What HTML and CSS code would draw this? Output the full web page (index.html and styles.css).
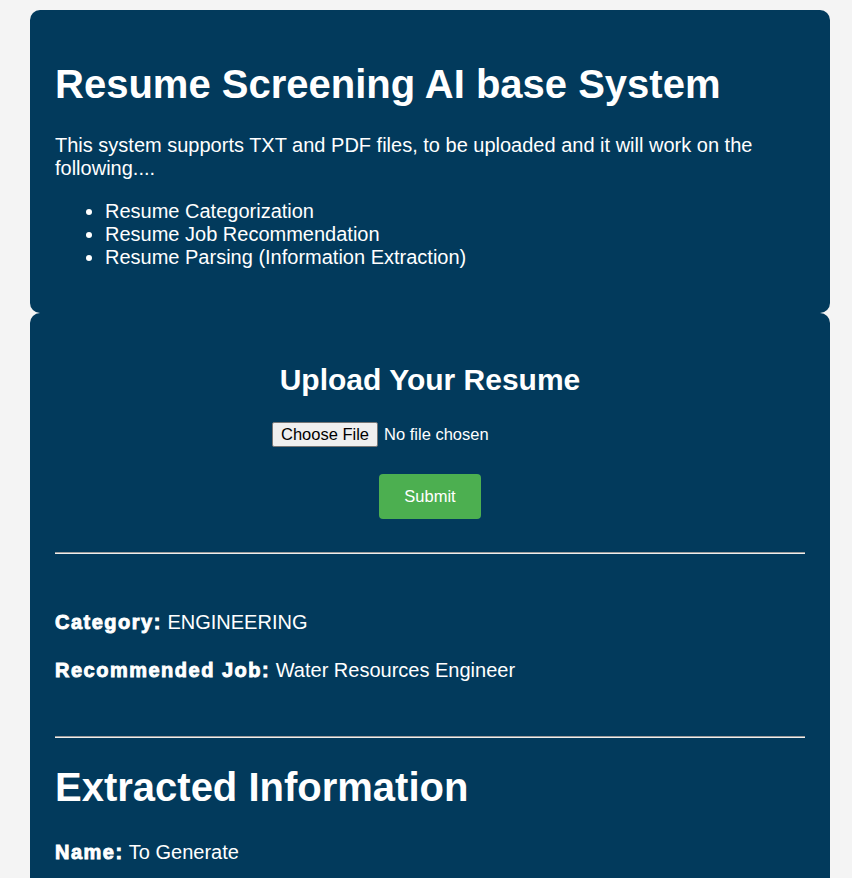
FILE: index.html
```html
<!DOCTYPE html>
<html lang="en">
<head>
<meta charset="utf-8">
<title>Resume Screening AI base System</title>
<link rel="stylesheet" href="styles.css">
</head>
<body>
<div class="container">
  <section class="card card-intro">
    <h1>Resume Screening AI base System</h1>
    <p>This system supports TXT and PDF files, to be uploaded and it will work on the following....</p>
    <ul>
      <li>Resume Categorization</li>
      <li>Resume Job Recommendation</li>
      <li>Resume Parsing (Information Extraction)</li>
    </ul>
  </section>
  <section class="card card-upload">
    <h2>Upload Your Resume</h2>
    <form class="upload-form">
      <input type="file" name="resume" class="file-input">
      <button type="button" class="submit-btn">Submit</button>
    </form>
    <hr class="divider divider-top">
    <div class="results">
      <p class="result"><strong class="label">Category:</strong> ENGINEERING</p>
      <p class="result"><strong class="label">Recommended Job:</strong> Water Resources Engineer</p>
    </div>
    <hr class="divider">
    <h1>Extracted Information</h1>
    <p class="result name"><strong class="label">Name:</strong> To Generate</p>
  </section>
</div>
</body>
</html>
```

FILE: styles.css
```css
html, body {
  margin: 0;
}
body {
  padding: 10px 0 0 8px;
  background: #f4f4f4;
  font-family: "Liberation Sans", Arial, sans-serif;
  font-size: 20px;
  color: #ffffff;
}
.container {
  width: 800px;
  margin: 0 auto;
}
.card {
  background: #023a5c;
  border-radius: 10px;
  padding: 25px 25px 24px;
}
.card-upload {
  padding-top: 26px;
}
h1 {
  font-size: 40px;
  font-weight: bold;
  margin: 26.8px 0;
}
h2 {
  font-size: 30px;
  font-weight: bold;
  text-align: center;
  margin: 24.9px 0;
}
.card-intro p {
  margin: 20px 0;
  line-height: 23px;
}
.card-intro ul {
  margin: 20px 0;
  padding-left: 50px;
}
.upload-form {
  display: flex;
  flex-direction: column;
  align-items: center;
}
.file-input {
  font-family: "Liberation Sans", Arial, sans-serif;
  font-size: 16.5px;
  color: #ffffff;
  width: 316px;
}
.file-input::file-selector-button {
  font-family: "Liberation Sans", Arial, sans-serif;
  font-size: 16.5px;
  color: #000000;
  background: #efefef;
  border: 1px solid #767676;
  border-radius: 2px;
  padding: 2px 8px;
  margin-right: 6px;
}
.submit-btn {
  margin-top: 27px;
  background: #4caf50;
  color: #ffffff;
  border: none;
  border-radius: 4px;
  padding: 13px 25px;
  font-family: "Liberation Sans", Arial, sans-serif;
  font-size: 16.5px;
  line-height: 19px;
  cursor: pointer;
}
.divider {
  border: none;
  border-top: 1px solid #9a9a9a;
  border-bottom: 1px solid #eeeeee;
  margin: 0;
}
.divider-top {
  margin-top: 33px;
}
.results {
  padding: 57px 0 54px;
}
.result {
  margin: 0;
  line-height: 23px;
}
.results .result + .result {
  margin-top: 25px;
}
.name {
  margin-top: 31px;
}
.label {
  font-weight: bold;
  letter-spacing: 1.5px;
  -webkit-text-stroke: 0.9px #ffffff;
}
```
